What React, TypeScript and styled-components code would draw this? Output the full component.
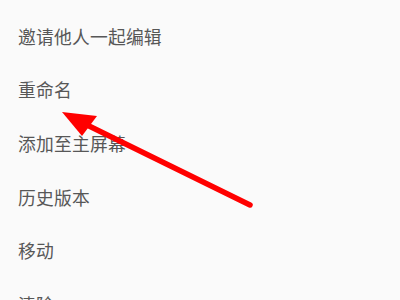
import styled, { createGlobalStyle } from "styled-components";

const GlobalStyle = createGlobalStyle`
  html, body {
    margin: 0;
    padding: 0;
    background: #fafafa;
  }
`;

const Screen = styled.div`
  position: relative;
  width: 400px;
  height: 300px;
  overflow: hidden;
  background: #fafafa;
  font-family: "Noto Sans CJK SC", "Noto Sans", sans-serif;
`;

const Menu = styled.ul`
  list-style: none;
  margin: 0;
  padding: 9px 0 0 0;
  display: flex;
  flex-direction: column;
`;

const MenuItem = styled.li`
  height: 53.6px;
  display: flex;
  align-items: center;
  padding-left: 18px;
  font-size: 17.8px;
  color: #575757;
  letter-spacing: 0.2px;
`;

const ArrowLayer = styled.svg`
  position: absolute;
  left: 0;
  top: 0;
  pointer-events: none;
`;

const items = ["邀请他人一起编辑", "重命名", "添加至主屏幕", "历史版本", "移动", "清除"];

function App() {
  return (
    <Screen>
      <GlobalStyle />
      <Menu>
        {items.map((label) => (
          <MenuItem key={label}>{label}</MenuItem>
        ))}
      </Menu>
      <ArrowLayer width="400" height="300" viewBox="0 0 400 300">
        <line
          x1="250"
          y1="205"
          x2="85"
          y2="124"
          stroke="#ff0000"
          strokeWidth="5.5"
          strokeLinecap="round"
        />
        <polygon points="62,112 97,116 82,136" fill="#ff0000" />
      </ArrowLayer>
    </Screen>
  );
}

export default App;
